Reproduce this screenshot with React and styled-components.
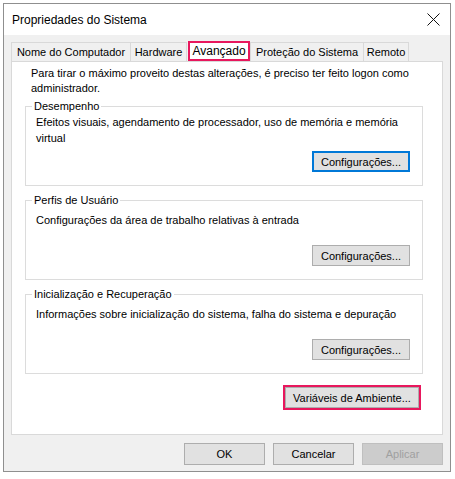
import React from 'react'
import styled, { createGlobalStyle, css } from 'styled-components'

const GlobalStyle = createGlobalStyle`
  html, body {
    margin: 0;
    padding: 0;
    background: #ffffff;
  }
  body {
    font-family: 'Liberation Sans', Arial, sans-serif;
    font-size: 11px;
    color: #000;
  }
  * {
    box-sizing: border-box;
  }
`

const Window = styled.div`
  margin: 3px 0 0 3px;
  width: 448px;
  height: 469px;
  border: 1px solid #8f8f8f;
  background: #f0f0f0;
  display: flex;
  flex-direction: column;
`

const TitleBar = styled.div`
  height: 31px;
  background: #ffffff;
  display: flex;
  align-items: center;
  justify-content: space-between;
  padding: 0 10px 0 8px;
`

const Title = styled.span`
  font-size: 12px;
  color: #000;
`

const CloseBtn = styled.div`
  width: 14px;
  height: 14px;
  display: flex;
  align-items: center;
  justify-content: center;
`

const Body = styled.div`
  padding: 6px 7px 0 7px;
  display: flex;
  flex-direction: column;
`

const TabStrip = styled.div`
  display: flex;
  align-items: flex-end;
  height: 20px;
  padding-left: 1px;
`

const Tab = styled.div`
  width: ${(p) => p.$w}px;
  height: 19px;
  display: flex;
  align-items: center;
  justify-content: center;
  border: 1px solid #d9d9d9;
  border-bottom: none;
  margin-left: -1px;
  background: #f0f0f0;
  white-space: nowrap;
  ${(p) =>
    p.$active &&
    css`
      height: 20px;
      margin: 0 1px 0 1px;
      background: #ffffff;
      border: 2px solid #e8175d;
      font-size: 12px;
      position: relative;
      z-index: 1;
    `}
`

const Panel = styled.div`
  background: #ffffff;
  border: 1px solid #d9d9d9;
  height: 374px;
  padding: 4px 19px 0 13px;
  display: flex;
  flex-direction: column;
`

const Intro = styled.p`
  margin: 0 0 3px 6px;
  line-height: 15px;
`

const Group = styled.fieldset`
  flex-shrink: 0;
  margin: 0 0 7px 0;
  border: 1px solid #dcdcdc;
  padding: 0 12px 12px 10px;
  height: 87px;
  min-width: 0;
`

const Legend = styled.legend`
  padding: 0 2px;
  margin-left: -4px;
  line-height: 15px;
`

const GroupBody = styled.div`
  height: 58px;
  padding-top: ${(p) => p.$top}px;
  display: flex;
  flex-direction: column;
  justify-content: space-between;
`

const GroupText = styled.div`
  line-height: 16px;
`

const ButtonRow = styled.div`
  display: flex;
  justify-content: flex-end;
  flex-shrink: 0;
`

const Button = styled.button`
  font-family: 'Liberation Sans', Arial, sans-serif;
  font-size: 11px;
  color: ${(p) => (p.disabled ? '#a0a0a0' : '#000')};
  background: ${(p) => (p.disabled ? '#cccccc' : '#e1e1e1')};
  border: 1px solid ${(p) => (p.disabled ? '#bfbfbf' : '#adadad')};
  width: ${(p) => p.$w || 98}px;
  height: 21px;
  padding: 0;
  margin: 0;
  ${(p) =>
    p.$focused &&
    css`
      border-color: #0078d7;
      box-shadow: inset 0 0 0 1px #0078d7;
    `}
`

const Highlight = styled.div`
  border: 2px solid #e8175d;
  display: flex;
  margin-top: 4px;
  margin-right: 2px;
`

const Footer = styled.div`
  display: flex;
  justify-content: flex-end;
  gap: 8px;
  padding: 8px 0 0 0;
`

const FooterButton = styled(Button)`
  width: 81px;
  height: 22px;
`

function CloseIcon() {
  return (
    <svg width="13" height="13" viewBox="0 0 13 13">
      <path d="M0.5 0.5 L12.5 12.5 M12.5 0.5 L0.5 12.5" stroke="#111" strokeWidth="1" fill="none" />
    </svg>
  )
}

const tabs = [
  { label: 'Nome do Computador', w: 120 },
  { label: 'Hardware', w: 57 },
  { label: 'Avançado', w: 62, active: true },
  { label: 'Proteção do Sistema', w: 114 },
  { label: 'Remoto', w: 46 },
]

const groups = [
  {
    title: 'Desempenho',
    text: 'Efeitos visuais, agendamento de processador, uso de memória e memória virtual',
    top: 0,
    focused: true,
  },
  {
    title: 'Perfis de Usuário',
    text: 'Configurações da área de trabalho relativas à entrada',
    top: 4,
  },
  {
    title: 'Inicialização e Recuperação',
    text: 'Informações sobre inicialização do sistema, falha do sistema e depuração',
    top: 4,
  },
]

export default function App() {
  return (
    <>
      <GlobalStyle />
      <Window>
        <TitleBar>
          <Title>Propriedades do Sistema</Title>
          <CloseBtn>
            <CloseIcon />
          </CloseBtn>
        </TitleBar>
        <Body>
          <TabStrip>
            {tabs.map((t) => (
              <Tab key={t.label} $w={t.w} $active={t.active}>
                {t.label}
              </Tab>
            ))}
          </TabStrip>
          <Panel>
            <Intro>
              Para tirar o máximo proveito destas alterações, é preciso ter feito logon como
              administrador.
            </Intro>
            {groups.map((g) => (
              <Group key={g.title}>
                <Legend>{g.title}</Legend>
                <GroupBody $top={g.top}>
                  <GroupText>{g.text}</GroupText>
                  <ButtonRow>
                    <Button $focused={g.focused}>Configurações...</Button>
                  </ButtonRow>
                </GroupBody>
              </Group>
            ))}
            <ButtonRow>
              <Highlight>
                <Button $w={134}>Variáveis de Ambiente...</Button>
              </Highlight>
            </ButtonRow>
          </Panel>
          <Footer>
            <FooterButton>OK</FooterButton>
            <FooterButton>Cancelar</FooterButton>
            <FooterButton disabled>Aplicar</FooterButton>
          </Footer>
        </Body>
      </Window>
    </>
  )
}
